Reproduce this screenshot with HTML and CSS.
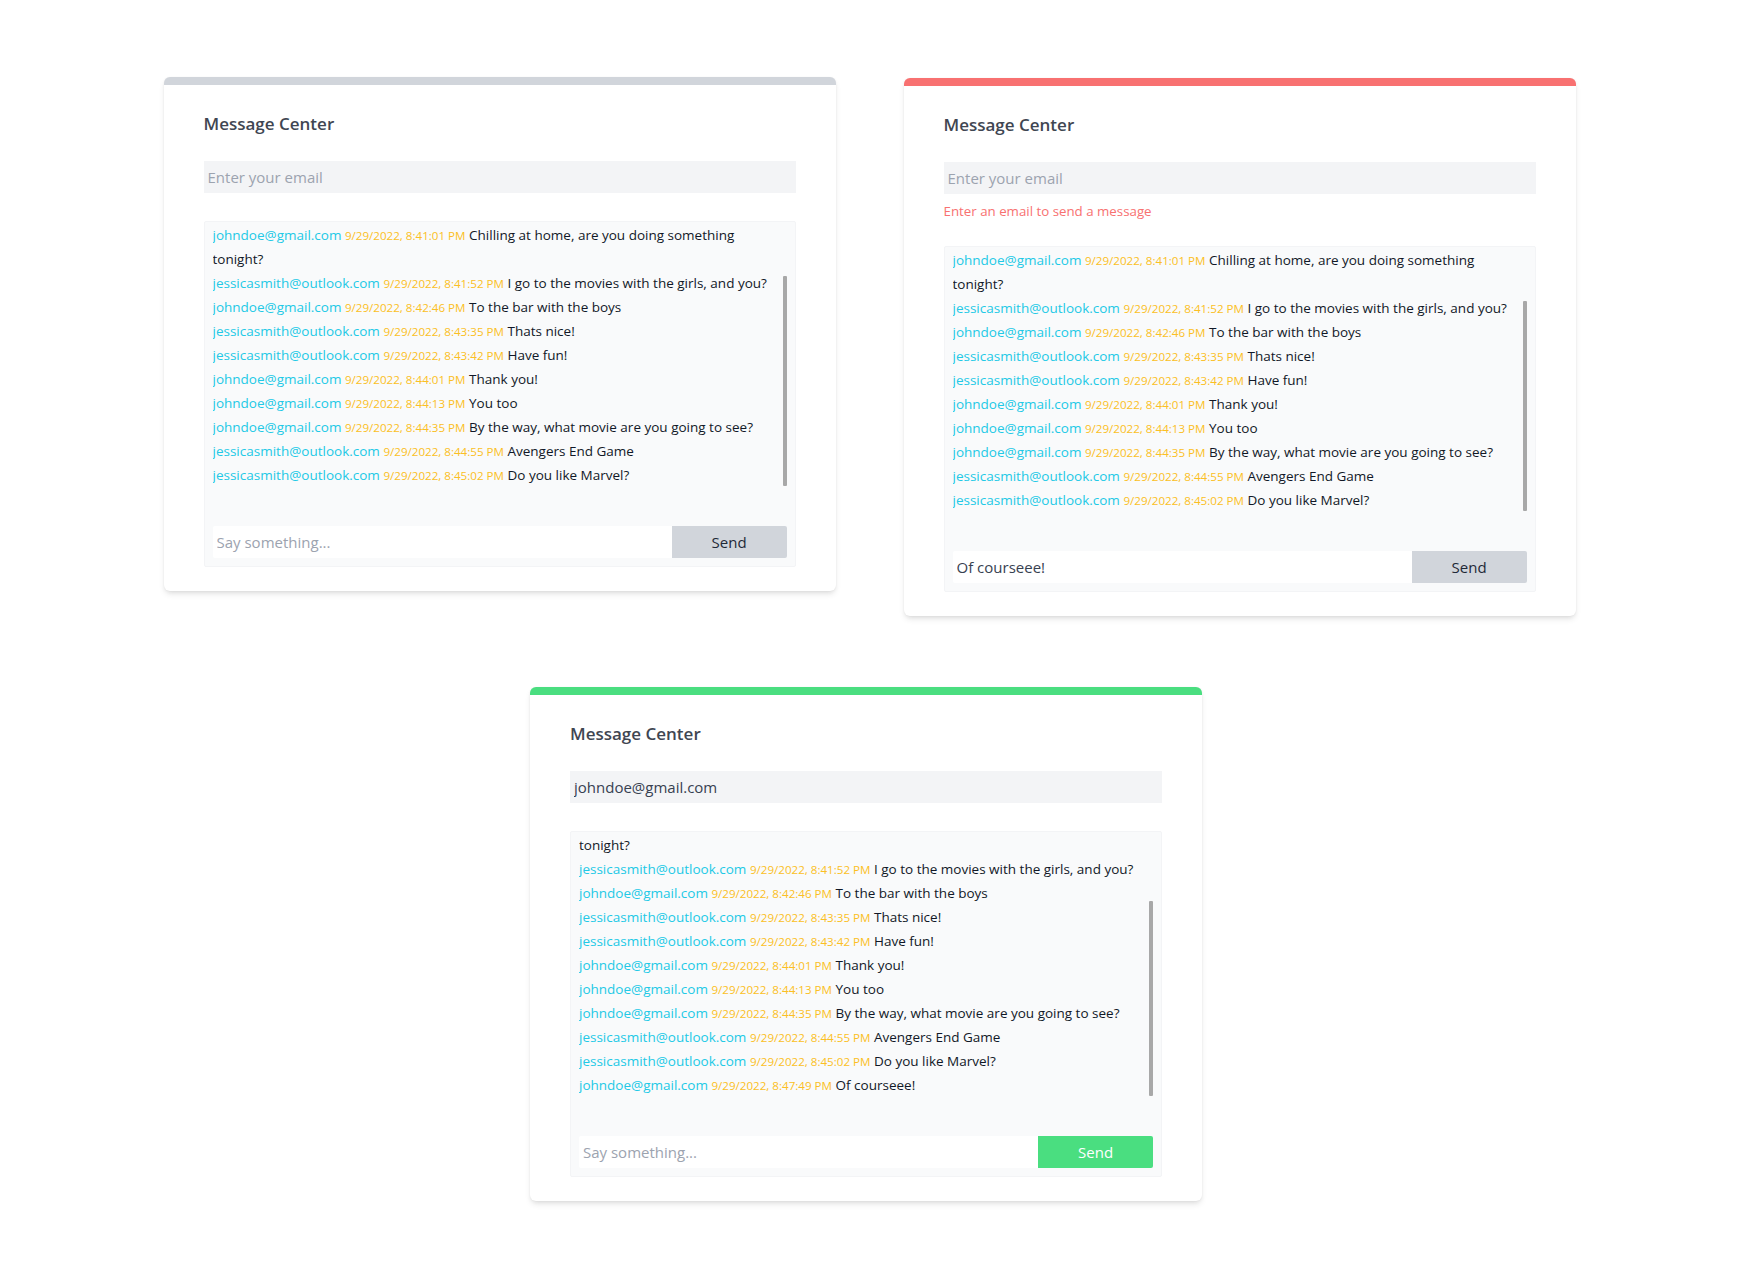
FILE: index.html
```html
<!DOCTYPE html>
<html lang="en">
<head>
<meta charset="utf-8">
<title>Message Center</title>
<link rel="stylesheet" href="styles.css">
</head>
<body>
<main class="page">
  <div class="row row--top">
    <section class="card card--gray">
      <h2 class="card__title">Message Center</h2>
      <input class="email-input" type="text" placeholder="Enter your email">
      <div class="chat chat--spaced">
        <div class="chat__list">
          <div class="messages">
            <p class="msg"><span class="msg__from">johndoe@gmail.com</span> <span class="msg__time">9/29/2022, 8:41:01 PM</span> <span class="msg__text">Chilling at home, are you doing something<br>tonight?</span></p>
            <p class="msg"><span class="msg__from">jessicasmith@outlook.com</span> <span class="msg__time">9/29/2022, 8:41:52 PM</span> <span class="msg__text">I go to the movies with the girls, and you?</span></p>
            <p class="msg"><span class="msg__from">johndoe@gmail.com</span> <span class="msg__time">9/29/2022, 8:42:46 PM</span> <span class="msg__text">To the bar with the boys</span></p>
            <p class="msg"><span class="msg__from">jessicasmith@outlook.com</span> <span class="msg__time">9/29/2022, 8:43:35 PM</span> <span class="msg__text">Thats nice!</span></p>
            <p class="msg"><span class="msg__from">jessicasmith@outlook.com</span> <span class="msg__time">9/29/2022, 8:43:42 PM</span> <span class="msg__text">Have fun!</span></p>
            <p class="msg"><span class="msg__from">johndoe@gmail.com</span> <span class="msg__time">9/29/2022, 8:44:01 PM</span> <span class="msg__text">Thank you!</span></p>
            <p class="msg"><span class="msg__from">johndoe@gmail.com</span> <span class="msg__time">9/29/2022, 8:44:13 PM</span> <span class="msg__text">You too</span></p>
            <p class="msg"><span class="msg__from">johndoe@gmail.com</span> <span class="msg__time">9/29/2022, 8:44:35 PM</span> <span class="msg__text">By the way, what movie are you going to see?</span></p>
            <p class="msg"><span class="msg__from">jessicasmith@outlook.com</span> <span class="msg__time">9/29/2022, 8:44:55 PM</span> <span class="msg__text">Avengers End Game</span></p>
            <p class="msg"><span class="msg__from">jessicasmith@outlook.com</span> <span class="msg__time">9/29/2022, 8:45:02 PM</span> <span class="msg__text">Do you like Marvel?</span></p>
          </div>
          <div class="thumb thumb--top"></div>
        </div>
        <div class="send-row">
          <input class="send-row__input" type="text" placeholder="Say something...">
          <button class="send-row__btn" type="button">Send</button>
        </div>
      </div>
    </section>

    <section class="card card--red">
      <h2 class="card__title">Message Center</h2>
      <input class="email-input" type="text" placeholder="Enter your email">
      <p class="error">Enter an email to send a message</p>
      <div class="chat chat--after-error">
        <div class="chat__list">
          <div class="messages">
            <p class="msg"><span class="msg__from">johndoe@gmail.com</span> <span class="msg__time">9/29/2022, 8:41:01 PM</span> <span class="msg__text">Chilling at home, are you doing something<br>tonight?</span></p>
            <p class="msg"><span class="msg__from">jessicasmith@outlook.com</span> <span class="msg__time">9/29/2022, 8:41:52 PM</span> <span class="msg__text">I go to the movies with the girls, and you?</span></p>
            <p class="msg"><span class="msg__from">johndoe@gmail.com</span> <span class="msg__time">9/29/2022, 8:42:46 PM</span> <span class="msg__text">To the bar with the boys</span></p>
            <p class="msg"><span class="msg__from">jessicasmith@outlook.com</span> <span class="msg__time">9/29/2022, 8:43:35 PM</span> <span class="msg__text">Thats nice!</span></p>
            <p class="msg"><span class="msg__from">jessicasmith@outlook.com</span> <span class="msg__time">9/29/2022, 8:43:42 PM</span> <span class="msg__text">Have fun!</span></p>
            <p class="msg"><span class="msg__from">johndoe@gmail.com</span> <span class="msg__time">9/29/2022, 8:44:01 PM</span> <span class="msg__text">Thank you!</span></p>
            <p class="msg"><span class="msg__from">johndoe@gmail.com</span> <span class="msg__time">9/29/2022, 8:44:13 PM</span> <span class="msg__text">You too</span></p>
            <p class="msg"><span class="msg__from">johndoe@gmail.com</span> <span class="msg__time">9/29/2022, 8:44:35 PM</span> <span class="msg__text">By the way, what movie are you going to see?</span></p>
            <p class="msg"><span class="msg__from">jessicasmith@outlook.com</span> <span class="msg__time">9/29/2022, 8:44:55 PM</span> <span class="msg__text">Avengers End Game</span></p>
            <p class="msg"><span class="msg__from">jessicasmith@outlook.com</span> <span class="msg__time">9/29/2022, 8:45:02 PM</span> <span class="msg__text">Do you like Marvel?</span></p>
          </div>
          <div class="thumb thumb--top"></div>
        </div>
        <div class="send-row">
          <input class="send-row__input" type="text" value="Of courseee!">
          <button class="send-row__btn" type="button">Send</button>
        </div>
      </div>
    </section>
  </div>

  <div class="row row--bottom">
    <section class="card card--green">
      <h2 class="card__title">Message Center</h2>
      <input class="email-input" type="text" value="johndoe@gmail.com">
      <div class="chat chat--spaced">
        <div class="chat__list">
          <div class="messages messages--scrolled">
            <p class="msg"><span class="msg__from">johndoe@gmail.com</span> <span class="msg__time">9/29/2022, 8:41:01 PM</span> <span class="msg__text">Chilling at home, are you doing something<br>tonight?</span></p>
            <p class="msg"><span class="msg__from">jessicasmith@outlook.com</span> <span class="msg__time">9/29/2022, 8:41:52 PM</span> <span class="msg__text">I go to the movies with the girls, and you?</span></p>
            <p class="msg"><span class="msg__from">johndoe@gmail.com</span> <span class="msg__time">9/29/2022, 8:42:46 PM</span> <span class="msg__text">To the bar with the boys</span></p>
            <p class="msg"><span class="msg__from">jessicasmith@outlook.com</span> <span class="msg__time">9/29/2022, 8:43:35 PM</span> <span class="msg__text">Thats nice!</span></p>
            <p class="msg"><span class="msg__from">jessicasmith@outlook.com</span> <span class="msg__time">9/29/2022, 8:43:42 PM</span> <span class="msg__text">Have fun!</span></p>
            <p class="msg"><span class="msg__from">johndoe@gmail.com</span> <span class="msg__time">9/29/2022, 8:44:01 PM</span> <span class="msg__text">Thank you!</span></p>
            <p class="msg"><span class="msg__from">johndoe@gmail.com</span> <span class="msg__time">9/29/2022, 8:44:13 PM</span> <span class="msg__text">You too</span></p>
            <p class="msg"><span class="msg__from">johndoe@gmail.com</span> <span class="msg__time">9/29/2022, 8:44:35 PM</span> <span class="msg__text">By the way, what movie are you going to see?</span></p>
            <p class="msg"><span class="msg__from">jessicasmith@outlook.com</span> <span class="msg__time">9/29/2022, 8:44:55 PM</span> <span class="msg__text">Avengers End Game</span></p>
            <p class="msg"><span class="msg__from">jessicasmith@outlook.com</span> <span class="msg__time">9/29/2022, 8:45:02 PM</span> <span class="msg__text">Do you like Marvel?</span></p>
            <p class="msg"><span class="msg__from">johndoe@gmail.com</span> <span class="msg__time">9/29/2022, 8:47:49 PM</span> <span class="msg__text">Of courseee!</span></p>
          </div>
          <div class="thumb thumb--bottom"></div>
        </div>
        <div class="send-row">
          <input class="send-row__input" type="text" placeholder="Say something...">
          <button class="send-row__btn send-row__btn--green" type="button">Send</button>
        </div>
      </div>
    </section>
  </div>
</main>
</body>
</html>
```

FILE: styles.css
```css
* {
  box-sizing: border-box;
}

html, body {
  margin: 0;
  padding: 0;
  background: #ffffff;
}

body {
  font-family: "Open Sans", "Noto Sans", "Liberation Sans", sans-serif;
  color: #111827;
}

.page {
  padding-top: 77px;
  padding-bottom: 80px;
}

.row {
  display: flex;
  justify-content: center;
  align-items: flex-start;
}

.row--top {
  gap: 68px;
  padding-right: 8px;
}

.row--bottom {
  margin-top: 71px;
  padding-right: 15px;
}

.card {
  width: 672px;
  background: #ffffff;
  border-top: 8px solid #d1d5db;
  border-radius: 6px;
  box-shadow: 0 4px 6px -1px rgba(0, 0, 0, 0.1), 0 2px 4px -1px rgba(0, 0, 0, 0.06), 0 0 2px rgba(0, 0, 0, 0.04);
  padding: 25px 40px 24px;
}

.card--gray { border-top-color: #d1d5db; }
.card--red { border-top-color: #f87171; margin-top: 1px; }
.card--green { border-top-color: #4ade80; }

.card__title {
  margin: 0;
  font-size: 17px;
  line-height: 28px;
  font-weight: 600;
  color: #3f4652;
}

.email-input {
  display: block;
  width: 100%;
  height: 32px;
  margin-top: 23px;
  border: none;
  outline: none;
  background: #f3f4f6;
  padding: 0 4px;
  font-family: inherit;
  font-size: 15px;
  color: #374151;
}

.email-input::placeholder {
  color: #9ca3af;
}

.error {
  margin: 7px 0 0;
  font-size: 13.3px;
  line-height: 20px;
  color: #f87171;
}

.chat {
  background: #f9fafb;
  border: 1px solid #f3f4f6;
  border-radius: 2px;
  padding: 0 8px 8px;
}

.chat--spaced { margin-top: 28px; }
.chat--after-error { margin-top: 25px; }

.chat__list {
  position: relative;
  height: 296px;
  overflow: hidden;
  padding-top: 1px;
}

.messages--scrolled {
  margin-top: -24px;
}

.msg {
  margin: 0;
  font-size: 13.5px;
  line-height: 24px;
  white-space: nowrap;
}

.msg__from {
  color: #22c9e6;
}

.msg__time {
  color: #fbbf24;
  font-size: 11.6px;
  line-height: 1;
}

.msg__text {
  color: #111827;
}

.thumb {
  position: absolute;
  right: 0;
  width: 4px;
  background: #a8a8a8;
  border-radius: 1px;
}

.thumb--top {
  top: 54px;
  height: 210px;
}

.thumb--bottom {
  top: 69px;
  height: 195px;
}

.send-row {
  display: flex;
  height: 32px;
  margin-top: 8px;
}

.send-row__input {
  flex: 1;
  min-width: 0;
  height: 32px;
  border: none;
  outline: none;
  background: #ffffff;
  padding: 0 4px;
  font-family: inherit;
  font-size: 15px;
  color: #374151;
  border-radius: 2px 0 0 2px;
}

.send-row__input::placeholder {
  color: #9ca3af;
}

.send-row__btn {
  width: 20%;
  height: 32px;
  border: none;
  background: #d1d5db;
  color: #1f2937;
  font-family: inherit;
  font-size: 15px;
  border-radius: 0 2px 2px 0;
  padding: 0;
}

.send-row__btn--green {
  background: #4ade80;
  color: #ffffff;
}
```
